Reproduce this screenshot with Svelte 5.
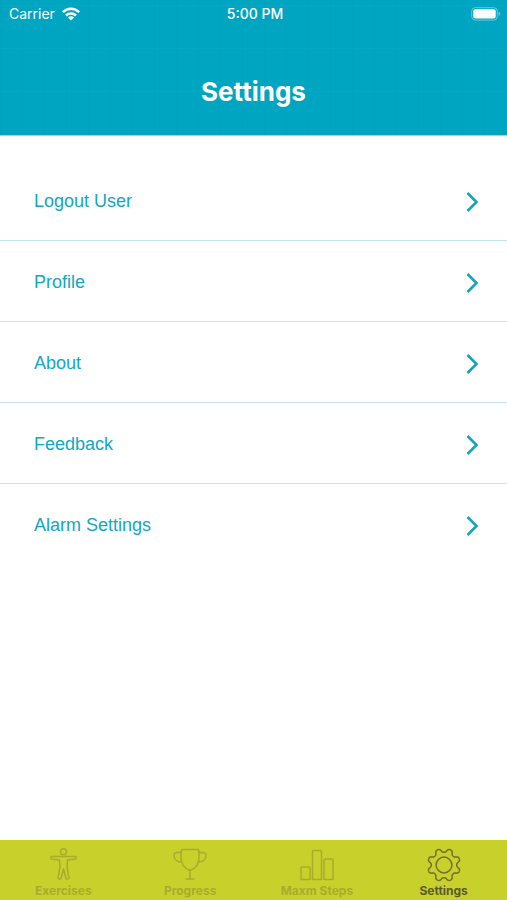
<script>
    let rows = ['Logout User', 'Profile', 'About', 'Feedback', 'Alarm Settings'];
    let tabs = ['Exercises', 'Progress', 'Maxm Steps', 'Settings'];
    let active = 'Settings';

    // outline of an eight-toothed gear around 18,18
    function gearPath() {
        let points = [];
        for (let i = 0; i < 192; i++) {
            const angle = (i / 192) * Math.PI * 2;
            const r = 14.6 + 2 * Math.tanh(-1.6 * Math.cos(8 * angle));
            points.push(`${(18 + r * Math.cos(angle)).toFixed(2)} ${(18 + r * Math.sin(angle)).toFixed(2)}`);
        }
        return 'M' + points.join('L') + 'Z';
    }
</script>

<div class="screen">
    <header>
        <div class="status">
            <div class="carrier">
                <span>Carrier</span>
                <svg width="18" height="14" viewBox="0 0 18 14" fill="none" stroke="#fff" stroke-width="2.5" aria-hidden="true">
                    <path d="M0.9 5.1C5.4 0.5 12.6 0.5 17.1 5.1" />
                    <path d="M4 8.5C6.8 5.7 11.2 5.7 14 8.5" />
                    <path d="M9 13.6L5.9 10.5C7.7 8.9 10.3 8.9 12.1 10.5Z" fill="#fff" stroke="none" />
                </svg>
            </div>
            <span class="time">5:00 PM</span>
            <div class="battery">
                <svg width="30" height="14" viewBox="0 0 30 14" aria-hidden="true">
                    <rect x="0.7" y="0.7" width="25.6" height="12.4" rx="3.5" fill="none" stroke="#6cc8d9" stroke-width="1" />
                    <rect x="2.3" y="2.3" width="22.4" height="9.2" rx="2" fill="#fff" />
                    <path d="M27.6 4.8C29.8 5.4 29.8 8.4 27.6 9Z" fill="#6cc8d9" />
                </svg>
            </div>
        </div>
        <h1>Settings</h1>
    </header>

    <main>
        <ul>
            {#each rows as row}
                <li>
                    <button class="row">
                        <span>{row}</span>
                        <svg width="14" height="22" viewBox="0 0 14 22" fill="none" stroke="#14a5bd" stroke-width="2.6" aria-hidden="true">
                            <path d="M1.5 2L10.5 11L1.5 20" />
                        </svg>
                    </button>
                </li>
            {/each}
        </ul>
    </main>

    <nav>
        {#each tabs as tab}
            <button class="tab" class:active={tab === active} on:click={() => (active = tab)}>
                <svg width="36" height="36" viewBox="0 0 36 36" fill="none" stroke="currentColor" stroke-width="1.5" stroke-linejoin="round" stroke-linecap="round" aria-hidden="true">
                    {#if tab === 'Exercises'}
                        <circle cx="18.5" cy="4.8" r="3" />
                        <path d="M6.2 9.4H30.8Q31.8 10.7 30.8 12L22.5 13L22 20L24 31Q22.5 33 21 31.5L18.5 22L16 31.5Q14.5 33 13 31L15 20L14.5 13L6.2 12Q5.2 10.7 6.2 9.4Z" />
                    {:else if tab === 'Progress'}
                        <path d="M11 2.5H25Q27 2.5 27 4.5V11C27 18 23 21.5 18 23.5C13 21.5 9 18 9 11V4.5Q9 2.5 11 2.5Z" />
                        <path d="M9 5.5H5.5Q2 5.5 2 8.5C2 12.5 5 15 9.6 15M27 5.5H30.5Q34 5.5 34 8.5C34 12.5 31 15 26.4 15" />
                        <path d="M18 23.5V32M14 32H22" />
                    {:else if tab === 'Maxm Steps'}
                        <path d="M2 21Q2 20 3 20H10Q11 20 11 21V32.5H2ZM13.5 4.5Q13.5 3.5 14.5 3.5H21.5Q22.5 3.5 22.5 4.5V32.5H13.5ZM25 13Q25 12 26 12H33Q34 12 34 13V32.5H25Z" />
                    {:else}
                        <path d={gearPath()} />
                        <circle cx="18" cy="18" r="7.9" />
                    {/if}
                </svg>
                <span>{tab}</span>
            </button>
        {/each}
    </nav>
</div>

<style>
:global(body) {
    margin: 0;
    background: #fff;
}
.screen {
    display: flex;
    flex-direction: column;
    min-height: 100vh;
    font-family: "Liberation Sans", Arial, sans-serif;
}
header {
    color: #fff;
    background-color: #00a6c1;
    background-image:
        repeating-linear-gradient(90deg, rgba(0, 80, 110, 0.03) 0 1px, transparent 1px 22px),
        repeating-linear-gradient(0deg, rgba(255, 255, 255, 0.02) 0 1px, transparent 1px 43px);
    border-bottom: 1px solid #8fdbe6;
    padding-bottom: 27px;
}
.status {
    display: grid;
    grid-template-columns: 1fr auto 1fr;
    align-items: center;
    height: 27px;
    padding: 0 6px 0 9px;
    font-family: Inter, sans-serif;
    font-size: 14px;
}
.carrier {
    display: flex;
    align-items: center;
    gap: 7px;
}
.time {
    font-weight: 500;
}
.battery {
    display: flex;
    justify-content: flex-end;
}
h1 {
    margin: 49px 0 0;
    font-family: Inter, sans-serif;
    font-size: 26px;
    line-height: 32px;
    font-weight: 700;
    text-align: center;
}
main {
    flex: 1;
    padding-top: 24px;
}
ul {
    list-style: none;
    margin: 0;
    padding: 0;
}
li + li {
    border-top: 1px solid #c5e6ef;
}
button {
    border: none;
    background: none;
    font: inherit;
    cursor: pointer;
}
.row {
    display: flex;
    align-items: center;
    justify-content: space-between;
    width: 100%;
    height: 80px;
    padding: 2px 27px 0 34px;
    color: #10a8c2;
    font-size: 18px;
}
.row svg {
    margin-top: 2px;
}
nav {
    display: grid;
    grid-template-columns: repeat(4, 1fr);
    background: #c8d02c;
}
.tab {
    display: flex;
    flex-direction: column;
    align-items: center;
    height: 60px;
    padding: 7px 0 0;
    color: #a8ac2b;
    font-family: Inter, sans-serif;
    font-size: 12px;
    line-height: 16px;
    font-weight: 700;
}
.tab.active {
    color: #5c5a2c;
}
.tab.active svg {
    color: #737029;
}
</style>
